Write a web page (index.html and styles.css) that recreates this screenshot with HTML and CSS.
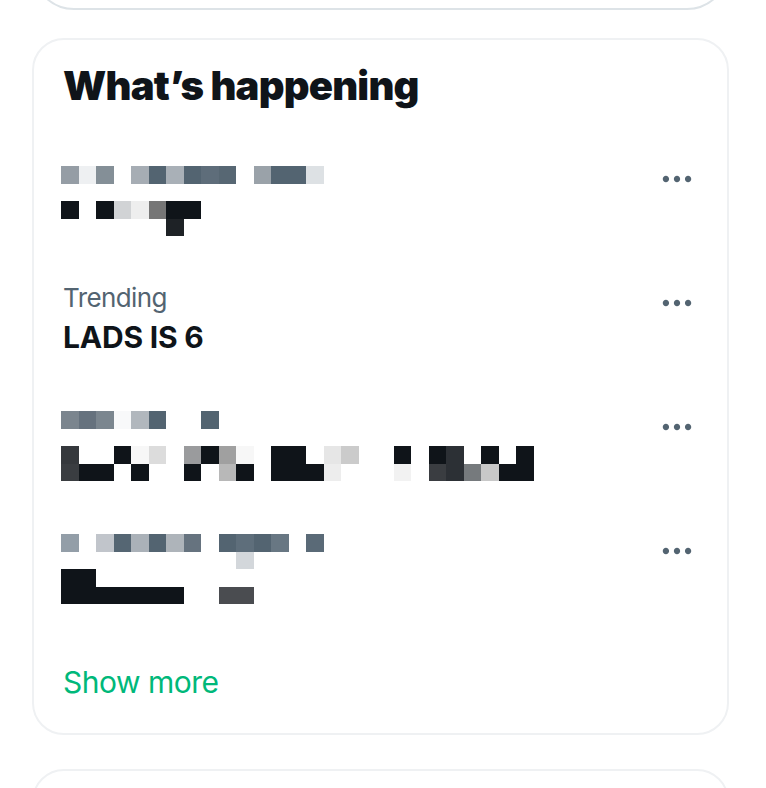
FILE: index.html
```html
<!DOCTYPE html>
<html lang="en">
<head>
    <meta charset="UTF-8">
    <meta name="viewport" content="width=device-width, initial-scale=1.0">
    <title>What's happening</title>
    <link rel="stylesheet" href="styles.css">
</head>
<body>

    <div class="sidebar">
        <div class="search"></div>

        <section class="card trends">
            <h2 class="card-title">What’s happening</h2>

            <div class="trend">
                <div class="trend-body">
                    <div class="mosaic" id="trend-1"></div>
                </div>
                <button class="more-btn" aria-label="More">
                    <svg viewBox="0 0 24 24"><path d="M3 12c0-1.1.9-2 2-2s2 .9 2 2-.9 2-2 2-2-.9-2-2zm9 2c1.1 0 2-.9 2-2s-.9-2-2-2-2 .9-2 2 .9 2 2 2zm7 0c1.1 0 2-.9 2-2s-.9-2-2-2-2 .9-2 2 .9 2 2 2z"/></svg>
                </button>
            </div>

            <div class="trend">
                <div class="trend-body">
                    <div class="trend-meta">Trending</div>
                    <div class="trend-name">LADS IS 6</div>
                </div>
                <button class="more-btn" aria-label="More">
                    <svg viewBox="0 0 24 24"><path d="M3 12c0-1.1.9-2 2-2s2 .9 2 2-.9 2-2 2-2-.9-2-2zm9 2c1.1 0 2-.9 2-2s-.9-2-2-2-2 .9-2 2 .9 2 2 2zm7 0c1.1 0 2-.9 2-2s-.9-2-2-2-2 .9-2 2 .9 2 2 2z"/></svg>
                </button>
            </div>

            <div class="trend">
                <div class="trend-body">
                    <div class="mosaic" id="trend-3"></div>
                </div>
                <button class="more-btn" aria-label="More">
                    <svg viewBox="0 0 24 24"><path d="M3 12c0-1.1.9-2 2-2s2 .9 2 2-.9 2-2 2-2-.9-2-2zm9 2c1.1 0 2-.9 2-2s-.9-2-2-2-2 .9-2 2 .9 2 2 2zm7 0c1.1 0 2-.9 2-2s-.9-2-2-2-2 .9-2 2 .9 2 2 2z"/></svg>
                </button>
            </div>

            <div class="trend">
                <div class="trend-body">
                    <div class="mosaic" id="trend-4"></div>
                </div>
                <button class="more-btn" aria-label="More">
                    <svg viewBox="0 0 24 24"><path d="M3 12c0-1.1.9-2 2-2s2 .9 2 2-.9 2-2 2-2-.9-2-2zm9 2c1.1 0 2-.9 2-2s-.9-2-2-2-2 .9-2 2 .9 2 2 2zm7 0c1.1 0 2-.9 2-2s-.9-2-2-2-2 .9-2 2 .9 2 2 2z"/></svg>
                </button>
            </div>

            <a class="show-more" href="#">Show more</a>
        </section>

        <section class="card"></section>
    </div>

    <script src="script.js"></script>
</body>
</html>
```

FILE: styles.css
```css
body {
    margin: 0;
    background-color: white;
    font-family: 'Inter', 'Noto Sans', sans-serif;
    color: #0f1419;
}
.sidebar {
    display: flex;
    flex-direction: column;
    height: 788px;
    overflow: hidden;
    padding-left: 32px;
}
.search {
    flex: none;
    width: 697px;
    height: 84px;
    margin-top: -74px;
    box-sizing: border-box;
    border: 2px solid #dde3e7;
    border-radius: 9999px;
}
.card {
    flex: none;
    width: 697px;
    box-sizing: border-box;
    border: 2px solid #eff1f3;
    border-radius: 32px;
    margin-top: 28px;
}
.card + .card {
    margin-top: 34px;
    height: 120px;
}
.card-title {
    margin: 0;
    padding: 22px 29px 23px;
    font-size: 40px;
    line-height: 48px;
    font-weight: 900;
    letter-spacing: -0.8px;
}
.trend {
    display: flex;
    height: 124px;
    box-sizing: border-box;
    padding: 24px 31px 24px 29px;
}
.trend-body {
    flex: 1;
}
.trend-meta {
    padding-top: 1px;
    font-size: 26px;
    line-height: 32px;
    letter-spacing: -0.6px;
    color: #536471;
}
.trend-name {
    margin-top: 3px;
    font-size: 30px;
    line-height: 40px;
    font-weight: 700;
    letter-spacing: -0.2px;
}
.more-btn {
    width: 38px;
    height: 38px;
    margin-top: 3px;
    padding: 0;
    border: none;
    background: none;
    cursor: pointer;
}
.more-btn svg {
    width: 38px;
    height: 38px;
    fill: #536471;
}
/* pixelated (censored) trends */
.mosaic {
    margin-left: -2px;
}
.mosaic-row {
    display: flex;
    height: 17.5px;
}
.mosaic-cell {
    width: 17.5px;
    flex: none;
}
.show-more {
    display: block;
    padding: 33px 29px 31px;
    font-size: 30px;
    line-height: 40px;
    letter-spacing: -0.5px;
    color: #00b87a;
    text-decoration: none;
}
```

FILE: script.js
```js
// rows of cell colours, "." = empty cell
const mosaics = {
    "trend-1": {
        top: 9,
        rows: [
            "959da5 eef0f2 848f97 . a6adb4 536471 a9b0b7 536471 5e6d7a 576773 . 9aa2a9 536471 536471 dde1e4",
            "",
            "0f1419 . 0f1419 d1d3d5 eeeeee 767676 0f1419 0f1419",
            ". . . . . . 1e2226"
        ]
    },
    "trend-3": {
        top: 6,
        rows: [
            "7b858e 66727e 7b868f f8f9fa b1b7bd 536471 . . 536471",
            "",
            "35383c . . 0f1419 f7f7f7 dcdcdc . 9a9b9d 0f1419 a0a0a0 f7f7f7 . 0f1419 0f1419 . e6e6e6 cbcbcb . . 0f1419 . 0f1419 2c3035 . 0f1419 . 0f1419",
            "3a3d41 0f1419 0f1419 . 0f1419 . . 0f1419 . b8b8b8 0f1419 . 0f1419 0f1419 0f1419 ededed . . . f2f2f2 . 3a3d41 2c3035 767a7d c8c8c8 0f1419 0f1419"
        ]
    },
    "trend-4": {
        top: 5,
        rows: [
            "939ea8 . c1c5cb 556673 aab1b8 536471 aeb4ba 66737f . 536471 5e6e7b 536471 687783 . 5a6a77",
            ". . . . . . . . . . d3d7db",
            "0f1419 0f1419",
            "0f1419 0f1419 0f1419 0f1419 0f1419 0f1419 0f1419 . . 4a4c50 4a4c50"
        ]
    }
};

for (const id in mosaics) {
    const box = document.getElementById(id);
    box.style.marginTop = mosaics[id].top + "px";
    mosaics[id].rows.forEach(row => {
        const rowEl = document.createElement("div");
        rowEl.className = "mosaic-row";
        row.split(" ").filter(c => c).forEach(c => {
            const cell = document.createElement("span");
            cell.className = "mosaic-cell";
            if (c !== ".") cell.style.background = "#" + c;
            rowEl.appendChild(cell);
        });
        box.appendChild(rowEl);
    });
}
```
